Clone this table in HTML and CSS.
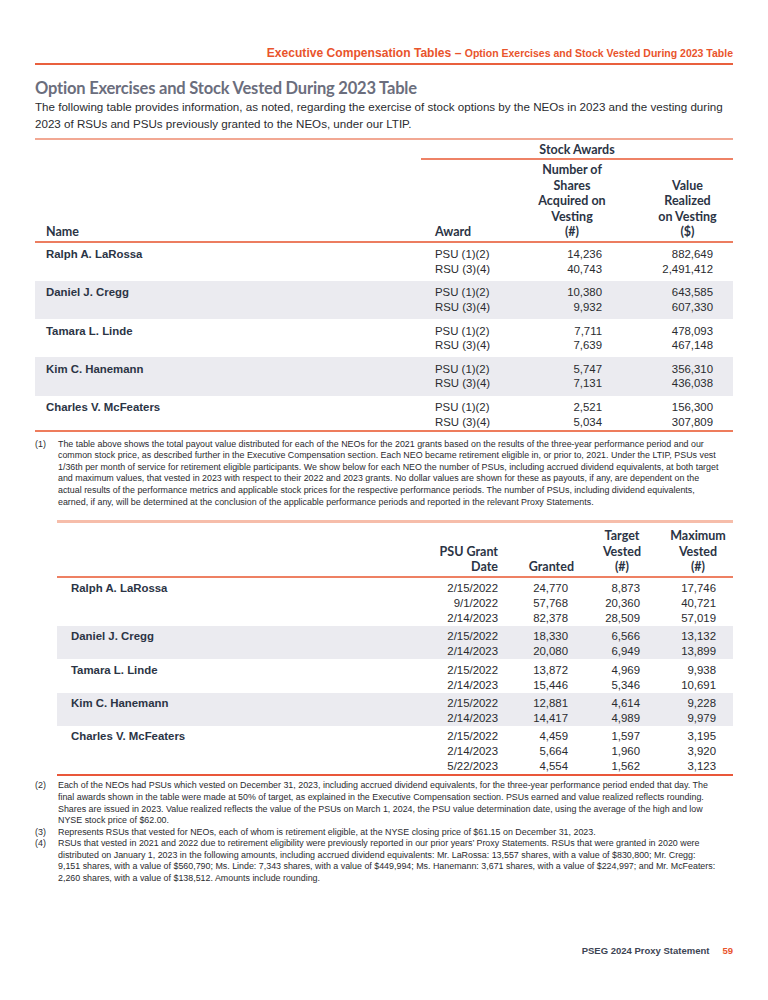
FILE: index.html
```html
<!DOCTYPE html>
<html lang="en">
<head>
<meta charset="utf-8">
<title>Option Exercises and Stock Vested During 2023 Table</title>
<link rel="stylesheet" href="styles.css">
</head>
<body>
<div class="page">
  <header class="running-head">
    <span class="rh-main">Executive Compensation Tables – </span><span class="rh-sub">Option Exercises and Stock Vested During 2023 Table</span>
  </header>

  <h1 class="title">Option Exercises and Stock Vested During 2023 Table</h1>
  <p class="intro">The following table provides information, as noted, regarding the exercise of stock options by the NEOs in 2023 and the vesting during 2023 of RSUs and PSUs previously granted to the NEOs, under our LTIP.</p>

  <table class="t1">
    <colgroup>
      <col class="c1-name"><col class="c1-award"><col class="c1-num"><col class="c1-val">
    </colgroup>
    <thead>
      <tr>
        <th rowspan="2" class="h-name">Name</th>
        <th colspan="3" class="h-group">Stock Awards</th>
      </tr>
      <tr>
        <th class="h-award">Award</th>
        <th class="h-num">Number of<br>Shares<br>Acquired on<br>Vesting<br>(#)</th>
        <th class="h-val">Value<br>Realized<br>on Vesting<br>($)</th>
      </tr>
    </thead>
    <tbody>
      <tr>
        <td class="name">Ralph A. LaRossa</td>
        <td class="award">PSU (1)(2)<br>RSU (3)(4)</td>
        <td class="num">14,236<br>40,743</td>
        <td class="val">882,649<br>2,491,412</td>
      </tr>
      <tr class="band">
        <td class="name">Daniel J. Cregg</td>
        <td class="award">PSU (1)(2)<br>RSU (3)(4)</td>
        <td class="num">10,380<br>9,932</td>
        <td class="val">643,585<br>607,330</td>
      </tr>
      <tr>
        <td class="name">Tamara L. Linde</td>
        <td class="award">PSU (1)(2)<br>RSU (3)(4)</td>
        <td class="num">7,711<br>7,639</td>
        <td class="val">478,093<br>467,148</td>
      </tr>
      <tr class="band">
        <td class="name">Kim C. Hanemann</td>
        <td class="award">PSU (1)(2)<br>RSU (3)(4)</td>
        <td class="num">5,747<br>7,131</td>
        <td class="val">356,310<br>436,038</td>
      </tr>
      <tr class="last">
        <td class="name">Charles V. McFeaters</td>
        <td class="award">PSU (1)(2)<br>RSU (3)(4)</td>
        <td class="num">2,521<br>5,034</td>
        <td class="val">156,300<br>307,809</td>
      </tr>
    </tbody>
  </table>

  <div class="notes notes-1">
    <div class="fn"><span class="fn-mark">(1)</span><span class="fn-text">The table above shows the total payout value distributed for each of the NEOs for the 2021 grants based on the results of the three-year performance period and our<br>common stock price, as described further in the Executive Compensation section. Each NEO became retirement eligible in, or prior to, 2021. Under the LTIP, PSUs vest<br>1/36th per month of service for retirement eligible participants. We show below for each NEO the number of PSUs, including accrued dividend equivalents, at both target<br>and maximum values, that vested in 2023 with respect to their 2022 and 2023 grants. No dollar values are shown for these as payouts, if any, are dependent on the<br>actual results of the performance metrics and applicable stock prices for the respective performance periods. The number of PSUs, including dividend equivalents,<br>earned, if any, will be determined at the conclusion of the applicable performance periods and reported in the relevant Proxy Statements.</span></div>
  </div>

  <table class="t2">
    <colgroup>
      <col class="c2-name"><col class="c2-date"><col class="c2-granted"><col class="c2-target"><col class="c2-max">
    </colgroup>
    <thead>
      <tr>
        <th class="h2-name"></th>
        <th class="h2-date">PSU Grant<br>Date</th>
        <th class="h2-granted">Granted</th>
        <th class="h2-target">Target<br>Vested<br>(#)</th>
        <th class="h2-max">Maximum<br>Vested<br>(#)</th>
      </tr>
    </thead>
    <tbody>
      <tr>
        <td class="name">Ralph A. LaRossa</td>
        <td class="date">2/15/2022<br>9/1/2022<br>2/14/2023</td>
        <td class="granted">24,770<br>57,768<br>82,378</td>
        <td class="target">8,873<br>20,360<br>28,509</td>
        <td class="max">17,746<br>40,721<br>57,019</td>
      </tr>
      <tr class="band">
        <td class="name">Daniel J. Cregg</td>
        <td class="date">2/15/2022<br>2/14/2023</td>
        <td class="granted">18,330<br>20,080</td>
        <td class="target">6,566<br>6,949</td>
        <td class="max">13,132<br>13,899</td>
      </tr>
      <tr>
        <td class="name">Tamara L. Linde</td>
        <td class="date">2/15/2022<br>2/14/2023</td>
        <td class="granted">13,872<br>15,446</td>
        <td class="target">4,969<br>5,346</td>
        <td class="max">9,938<br>10,691</td>
      </tr>
      <tr class="band">
        <td class="name">Kim C. Hanemann</td>
        <td class="date">2/15/2022<br>2/14/2023</td>
        <td class="granted">12,881<br>14,417</td>
        <td class="target">4,614<br>4,989</td>
        <td class="max">9,228<br>9,979</td>
      </tr>
      <tr class="last">
        <td class="name">Charles V. McFeaters</td>
        <td class="date">2/15/2022<br>2/14/2023<br>5/22/2023</td>
        <td class="granted">4,459<br>5,664<br>4,554</td>
        <td class="target">1,597<br>1,960<br>1,562</td>
        <td class="max">3,195<br>3,920<br>3,123</td>
      </tr>
    </tbody>
  </table>

  <div class="notes notes-2">
    <div class="fn"><span class="fn-mark">(2)</span><span class="fn-text">Each of the NEOs had PSUs which vested on December 31, 2023, including accrued dividend equivalents, for the three-year performance period ended that day. The<br>final awards shown in the table were made at 50% of target, as explained in the Executive Compensation section. PSUs earned and value realized reflects rounding.<br>Shares are issued in 2023. Value realized reflects the value of the PSUs on March 1, 2024, the PSU value determination date, using the average of the high and low<br>NYSE stock price of $62.00.</span></div>
    <div class="fn"><span class="fn-mark">(3)</span><span class="fn-text">Represents RSUs that vested for NEOs, each of whom is retirement eligible, at the NYSE closing price of $61.15 on December 31, 2023.</span></div>
    <div class="fn"><span class="fn-mark">(4)</span><span class="fn-text">RSUs that vested in 2021 and 2022 due to retirement eligibility were previously reported in our prior years’ Proxy Statements. RSUs that were granted in 2020 were<br>distributed on January 1, 2023 in the following amounts, including accrued dividend equivalents: Mr. LaRossa: 13,557 shares, with a value of $830,800; Mr. Cregg:<br>9,151 shares, with a value of $560,790; Ms. Linde: 7,343 shares, with a value of $449,994; Ms. Hanemann: 3,671 shares, with a value of $224,997; and Mr. McFeaters:<br>2,260 shares, with a value of $138,512. Amounts include rounding.</span></div>
  </div>

  <footer class="page-foot">
    <span class="pf-title">PSEG 2024 Proxy Statement</span><span class="pf-num">59</span>
  </footer>
</div>
</body>
</html>
```

FILE: styles.css
```css
html, body {
  margin: 0;
  padding: 0;
  background: #ffffff;
}

.page {
  width: 698px;
  padding: 0 35px;
  font-family: "Liberation Sans", Arial, sans-serif;
  color: #2a2b2f;
}

/* running head */
.running-head {
  margin-top: 44px;
  padding-bottom: 1.5px;
  border-bottom: 2px solid #e9603e;
  text-align: right;
  line-height: 15px;
  color: #e9542c;
  font-weight: 700;
}
.rh-main { font-size: 12.1px; }
.rh-sub { font-size: 10.5px; }

/* title */
.title {
  margin: 13px 0 0;
  font-family: Lato, "Open Sans", sans-serif;
  font-weight: 700;
  font-size: 16.5px;
  line-height: 20px;
  letter-spacing: -0.2px;
  color: #6b6e7d;
}

.intro {
  margin: 0;
  font-size: 11.6px;
  line-height: 17px;
  color: #2a2b2f;
}

/* shared table setup */
table {
  border-collapse: separate;
  border-spacing: 0;
  table-layout: fixed;
}
th {
  font-family: Lato, "Open Sans", sans-serif;
  font-weight: 700;
  font-size: 12.5px;
  color: #2b3445;
  vertical-align: bottom;
  padding: 0;
}
td {
  padding: 0;
  vertical-align: top;
  font-size: 11.4px;
  color: #2a2b2f;
}
td.name {
  font-weight: 700;
  color: #2b3445;
}
tr.band td { background: #ebebf0; }

/* table 1 */
.t1 {
  width: 698px;
  margin-top: 6px;
  border-top: 2px solid #f2a893;
}
.c1-name { width: 386px; }
.c1-award { width: 109px; }
.c1-num { width: 84px; }
.c1-val { width: 119px; }

.t1 th { line-height: 15.6px; }
.t1 .h-group {
  text-align: center;
  padding: 2.5px 0 0.5px;
  border-bottom: 2px solid #ee8266;
}
.t1 .h-name {
  text-align: left;
  padding: 0 0 0.5px 11px;
  border-bottom: 2.5px solid #ec7d60;
}
.t1 .h-award,
.t1 .h-num,
.t1 .h-val {
  padding-top: 2px;
  padding-bottom: 0.5px;
  border-bottom: 2.5px solid #ec7d60;
}
.t1 .h-award { text-align: left; padding-left: 14px; }
.t1 .h-num { text-align: center; }
.t1 .h-val { text-align: center; padding-left: 28px; }

.t1 td {
  line-height: 14.5px;
  padding-top: 4.5px;
  padding-bottom: 4.75px;
}
.t1 td.name { padding-left: 11px; }
.t1 td.award { padding-left: 14px; }
.t1 td.num { text-align: right; padding-right: 12px; }
.t1 td.val { text-align: right; padding-right: 20px; }
.t1 tr.last td {
  padding-bottom: 0.5px;
  border-bottom: 2px solid #ee7c5c;
}

/* footnotes */
.notes {
  font-size: 8.9px;
  line-height: 11.6px;
  color: #2a2b2f;
}
.notes-1 { margin-top: 7px; }
.notes-2 { margin-top: 4px; }
.fn { display: flex; }
.fn-mark { flex: none; width: 23px; }
.fn-text { flex: 1; }

/* table 2 */
.t2 {
  width: 676px;
  margin: 12px 0 0 22px;
  border-top: 3px solid #f6bdaa;
}
.c2-name { width: 363px; }
.c2-date { width: 85px; }
.c2-granted { width: 75px; }
.c2-target { width: 75px; }
.c2-max { width: 78px; }

.t2 th {
  line-height: 15.4px;
  padding-top: 5px;
  padding-bottom: 1.5px;
  border-bottom: 2px solid #ee8063;
}
.t2 .h2-date { text-align: right; padding-right: 7px; }
.t2 .h2-granted { text-align: right; padding-right: 6px; }
.t2 .h2-target { text-align: center; padding-left: 9px; }
.t2 .h2-max { text-align: center; padding-left: 8px; }

.t2 td {
  line-height: 15px;
  padding-top: 3.3px;
}
.t2 td.name { padding-left: 14px; }
.t2 td.date { text-align: right; padding-right: 7px; }
.t2 td.granted { text-align: right; padding-right: 12px; }
.t2 td.target { text-align: right; padding-right: 15px; }
.t2 td.max { text-align: right; padding-right: 17px; }
.t2 tr.last td { border-bottom: 2px solid #e9573a; }

/* page footer */
.page-foot {
  margin-top: 60px;
  display: flex;
  justify-content: flex-end;
  align-items: baseline;
  gap: 13px;
  font-weight: 700;
  font-size: 9.5px;
  line-height: 12px;
}
.pf-title { color: #3d4554; }
.pf-num { color: #e9542c; }
```
